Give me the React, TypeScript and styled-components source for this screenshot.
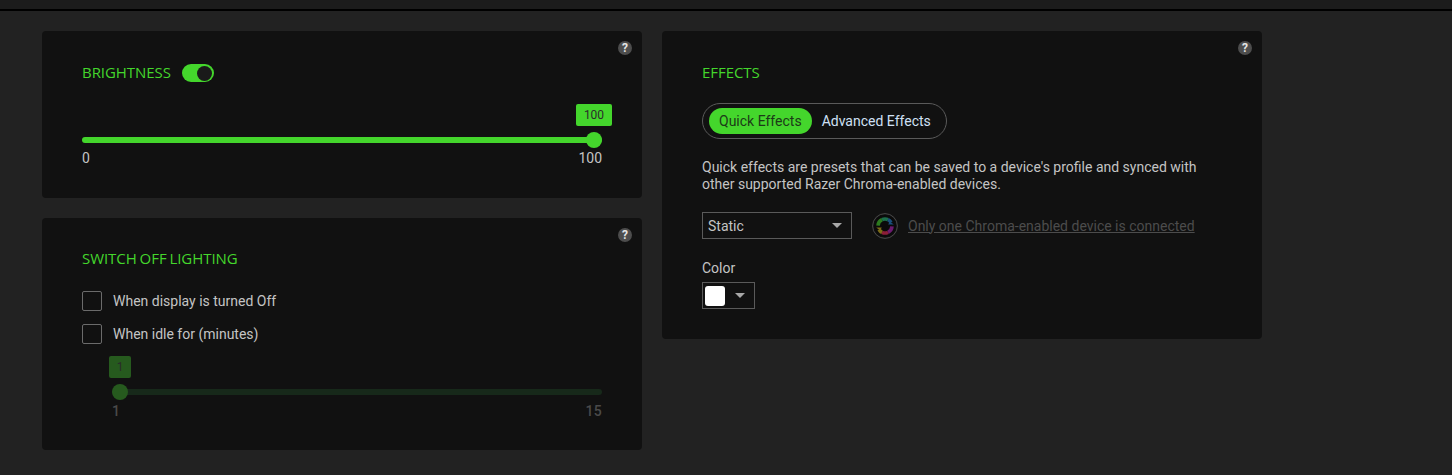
import styled, { createGlobalStyle } from "styled-components";

const GREEN = "#44d62c";
const DIM_GREEN = "#265a1e";

const Global = createGlobalStyle`
  html, body {
    margin: 0;
    padding: 0;
    height: 100%;
    background: #222222;
    overflow: hidden;
  }
  body {
    font-family: Roboto, "Liberation Sans", sans-serif;
    font-size: 14px;
    color: #c4c4c4;
  }
`;

const TopBar = styled.div`
  height: 9px;
  background: #1c1c1c;
  border-bottom: 2px solid #000;
`;

const Page = styled.div`
  display: flex;
  gap: 20px;
  align-items: flex-start;
  padding: 20px 42px 0;
`;

const Column = styled.div`
  display: flex;
  flex-direction: column;
  gap: 20px;
  width: 600px;
`;

const Card = styled.section<{ $height: number; $pad?: number }>`
  position: relative;
  box-sizing: border-box;
  width: 600px;
  height: ${(p) => p.$height}px;
  padding: ${(p) => p.$pad ?? 32}px 40px 0;
  background: #111111;
  border-radius: 4px;
`;

const Help = styled.span`
  position: absolute;
  top: 10px;
  right: 10px;
  width: 14px;
  height: 14px;
  border-radius: 50%;
  background: #4d4d4d;
  color: #e4e4e4;
  font-size: 12px;
  font-weight: 700;
  line-height: 14px;
  text-align: center;
`;

const TitleRow = styled.div`
  display: flex;
  align-items: center;
  gap: 10px;
  height: 20px;
`;

const Title = styled.h2`
  margin: 0 0 2px;
  font-family: "Open Sans", sans-serif;
  font-size: 15px;
  font-weight: 400;
  line-height: 18px;
  color: ${GREEN};
  text-transform: uppercase;
  letter-spacing: -0.05px;
  word-spacing: -1px;
`;

const Toggle = styled.span`
  position: relative;
  box-sizing: border-box;
  display: block;
  width: 32px;
  height: 18px;
  margin-left: 1px;
  border-radius: 9px;
  background: ${GREEN};
`;

const ToggleKnob = styled.span`
  position: absolute;
  top: 1.5px;
  right: 1.5px;
  width: 15px;
  height: 15px;
  border-radius: 50%;
  background: #1a1a1a;
`;

const Slider = styled.div<{ $top: number }>`
  position: relative;
  height: 6px;
  margin-top: ${(p) => p.$top}px;
`;

const Track = styled.div<{ $color: string }>`
  height: 6px;
  border-radius: 3px;
  background: ${(p) => p.$color};
`;

const Thumb = styled.span<{ $color: string }>`
  position: absolute;
  top: -5px;
  width: 16px;
  height: 16px;
  border-radius: 50%;
  background: ${(p) => p.$color};
`;

const Bubble = styled.span<{ $color: string; $width: number }>`
  position: absolute;
  top: -33px;
  width: ${(p) => p.$width}px;
  height: 22px;
  border-radius: 2px;
  background: ${(p) => p.$color};
  color: #2b2b2b;
  font-size: 12px;
  line-height: 22px;
  text-align: center;
`;

const Scale = styled.div<{ $dim?: boolean }>`
  display: flex;
  justify-content: space-between;
  margin-top: ${(p) => (p.$dim ? 8 : 7)}px;
  line-height: 16px;
  font-size: 14px;
  letter-spacing: ${(p) => (p.$dim ? 0.3 : 0)}px;
  color: ${(p) => (p.$dim ? "#4a4a4a" : "#c4c4c4")};
  font-weight: ${(p) => (p.$dim ? 500 : 400)};
`;

const CheckRow = styled.label<{ $top: number }>`
  display: flex;
  align-items: center;
  gap: 11px;
  height: 20px;
  margin-top: ${(p) => p.$top}px;
  line-height: 20px;
`;

const Box = styled.span`
  box-sizing: border-box;
  width: 20px;
  height: 20px;
  border: 1px solid #6b6b6b;
  border-radius: 2px;
`;

const Indented = styled.div`
  margin-left: 30px;
`;

const Tabs = styled.div`
  box-sizing: border-box;
  display: inline-flex;
  align-items: center;
  gap: 10px;
  height: 36px;
  margin-top: 20px;
  padding: 0 15px 0 6px;
  border: 1px solid #5a5a5a;
  border-radius: 18px;
`;

const Tab = styled.span<{ $active?: boolean }>`
  padding: ${(p) => (p.$active ? "0 10px" : "0")};
  height: 26px;
  line-height: 26px;
  border-radius: 13px;
  background: ${(p) => (p.$active ? GREEN : "transparent")};
  color: ${(p) => (p.$active ? "#1c3a18" : "#cfe0f5")};
`;

const Description = styled.p`
  margin: 20px 0 0;
  line-height: 17px;
  width: 510px;
`;

const ControlRow = styled.div`
  display: flex;
  align-items: center;
  gap: 20px;
  margin-top: 19px;
`;

const Select = styled.div`
  box-sizing: border-box;
  display: flex;
  align-items: center;
  justify-content: space-between;
  width: 150px;
  height: 27px;
  padding: 0 9px 0 5px;
  border: 1px solid #5a5a5a;
`;

const Caret = styled.span`
  width: 0;
  height: 0;
  border-left: 5px solid transparent;
  border-right: 5px solid transparent;
  border-top: 5px solid #a8a8a8;
`;

const SyncLink = styled.a`
  color: #4c4c4c;
  text-decoration: underline;
`;

const ChromaGroup = styled.div`
  display: flex;
  align-items: center;
  gap: 10px;
`;

const FieldLabel = styled.div`
  margin-top: 19px;
  line-height: 20px;
`;

const Swatch = styled.div`
  box-sizing: border-box;
  display: flex;
  align-items: center;
  gap: 10px;
  width: 53px;
  height: 27px;
  margin-top: 4px;
  padding-left: 2px;
  border: 1px solid #5a5a5a;
`;

const SwatchColor = styled.span`
  width: 20px;
  height: 20px;
  border-radius: 3px;
  background: #ffffff;
`;

// two chasing arcs, dimmed because the link next to it is disabled
function ChromaIcon() {
  return (
    <svg width="26" height="26" viewBox="0 0 26 26" fill="none">
      <circle cx="13" cy="13" r="12.4" stroke="#4a4a4a" strokeWidth="1" />
      <circle cx="13" cy="13" r="11" fill="#0b0b0b" />
      <path d="M6 12.6a7 7 0 0 1 4-5.9" stroke="#2c7a1f" strokeWidth="3.6" />
      <path d="M10 6.7a7 7 0 0 1 6 0" stroke="#1c6f4c" strokeWidth="3.6" />
      <path d="M16 6.7a7 7 0 0 1 3 2.8" stroke="#1a4f7c" strokeWidth="3.6" />
      <path d="M20 13.4a7 7 0 0 1-4 5.9" stroke="#6c1a70" strokeWidth="3.6" />
      <path d="M16 19.3a7 7 0 0 1-6 0" stroke="#8c1e38" strokeWidth="3.6" />
      <path d="M10 19.3a7 7 0 0 1-3-2.8" stroke="#7c6c18" strokeWidth="3.6" />
      <path d="M4.2 14.4h5.6l-1.6 3.2z" fill="#7c6c18" />
      <path d="M21.8 11.6h-5.6l1.6-3.2z" fill="#1a4f7c" />
    </svg>
  );
}

export default function App() {
  return (
    <>
      <Global />
      <TopBar />
      <Page>
        <Column>
          <Card $height={167}>
            <Help>?</Help>
            <TitleRow>
              <Title>Brightness</Title>
              <Toggle>
                <ToggleKnob />
              </Toggle>
            </TitleRow>
            <Slider $top={54}>
              <Track $color={GREEN} />
              <Thumb $color={GREEN} style={{ left: 504 }} />
              <Bubble $color={GREEN} $width={36} style={{ left: 494 }}>
                100
              </Bubble>
            </Slider>
            <Scale>
              <span>0</span>
              <span>100</span>
            </Scale>
          </Card>
          <Card $height={232} $pad={31}>
            <Help>?</Help>
            <Title>Switch off lighting</Title>
            <CheckRow $top={22 + 2}>
              <Box />
              When display is turned Off
            </CheckRow>
            <CheckRow $top={13}>
              <Box />
              When idle for (minutes)
            </CheckRow>
            <Indented>
              <Slider $top={45}>
                <Track $color="#17291a" />
                <Thumb $color={DIM_GREEN} style={{ left: 0 }} />
                <Bubble $color={DIM_GREEN} $width={22} style={{ left: -3 }}>
                  1
                </Bubble>
              </Slider>
              <Scale $dim>
                <span>1</span>
                <span>15</span>
              </Scale>
            </Indented>
          </Card>
        </Column>
        <Card $height={308} $pad={32}>
          <Help>?</Help>
          <Title>Effects</Title>
          <Tabs>
            <Tab $active>Quick Effects</Tab>
            <Tab>Advanced Effects</Tab>
          </Tabs>
          <Description>
            Quick effects are presets that can be saved to a device's profile and synced with
            other supported Razer Chroma-enabled devices.
          </Description>
          <ControlRow>
            <Select>
              Static
              <Caret />
            </Select>
            <ChromaGroup>
              <ChromaIcon />
              <SyncLink>Only one Chroma-enabled device is connected</SyncLink>
            </ChromaGroup>
          </ControlRow>
          <FieldLabel>Color</FieldLabel>
          <Swatch>
            <SwatchColor />
            <Caret />
          </Swatch>
        </Card>
      </Page>
    </>
  );
}
